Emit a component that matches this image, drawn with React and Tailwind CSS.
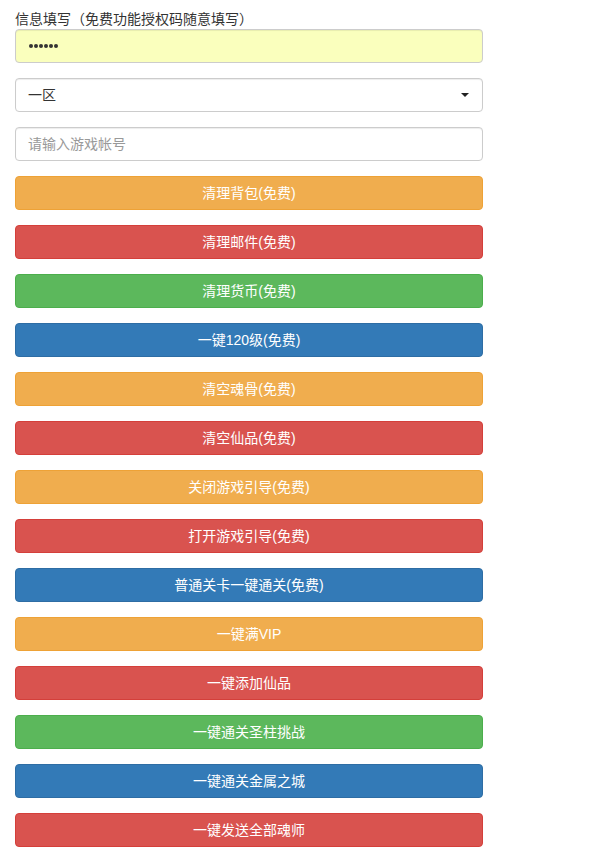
import React from 'react'

const buttons = [
  ['清理背包(免费)', 'warning'],
  ['清理邮件(免费)', 'danger'],
  ['清理货币(免费)', 'success'],
  ['一键120级(免费)', 'primary'],
  ['清空魂骨(免费)', 'warning'],
  ['清空仙品(免费)', 'danger'],
  ['关闭游戏引导(免费)', 'warning'],
  ['打开游戏引导(免费)', 'danger'],
  ['普通关卡一键通关(免费)', 'primary'],
  ['一键满VIP', 'warning'],
  ['一键添加仙品', 'danger'],
  ['一键通关圣柱挑战', 'success'],
  ['一键通关金属之城', 'primary'],
  ['一键发送全部魂师', 'danger'],
]

const colors = {
  warning: 'bg-[#f0ad4e] border-[#eea236]',
  danger: 'bg-[#d9534f] border-[#d43f3a]',
  success: 'bg-[#5cb85c] border-[#4cae4c]',
  primary: 'bg-[#337ab7] border-[#2e6da4]',
}

export default function App() {
  return (
    <div
      className="bg-white min-h-screen px-[15px] pt-[9px] text-[#333] text-[14px]"
      style={{ fontFamily: '"Liberation Sans", "Noto Sans CJK SC", sans-serif' }}
    >
      <div className="w-[468px]">
        <label className="block leading-[20px]">信息填写（免费功能授权码随意填写）</label>

        <div className="h-[34px] rounded-[4px] border border-[#ccc] bg-[#faffbd] shadow-[inset_0_1px_1px_rgba(0,0,0,0.075)] flex items-center px-3 mb-[15px]">
          {/* password dots */}
          <div className="flex gap-[1px] ml-[1px]">
            {Array(6).fill().map((_, i) => (
              <span key={i} className="w-[4px] h-[4px] rounded-full bg-[#333]" />
            ))}
          </div>
        </div>

        <div className="h-[34px] rounded-[4px] border border-[#ccc] bg-white shadow-[inset_0_1px_1px_rgba(0,0,0,0.075)] flex items-center justify-between pl-3 pr-[13px] mb-[15px]">
          <span className="text-[#333]">一区</span>
          <svg width="8" height="4" viewBox="0 0 8 4">
            <path d="M0 0h8L4 4z" fill="#222" />
          </svg>
        </div>

        <div className="h-[34px] rounded-[4px] border border-[#ccc] bg-white shadow-[inset_0_1px_1px_rgba(0,0,0,0.075)] flex items-center px-3 mb-[15px]">
          <span className="text-[#999]">请输入游戏帐号</span>
        </div>

        <div className="flex flex-col gap-[15px]">
          {buttons.map(([label, kind], i) => (
            <button
              key={i}
              className={`h-[34px] w-full rounded-[4px] border text-white text-[14px] flex items-center justify-center ${colors[kind]}`}
            >
              {label}
            </button>
          ))}
        </div>
      </div>
    </div>
  )
}
